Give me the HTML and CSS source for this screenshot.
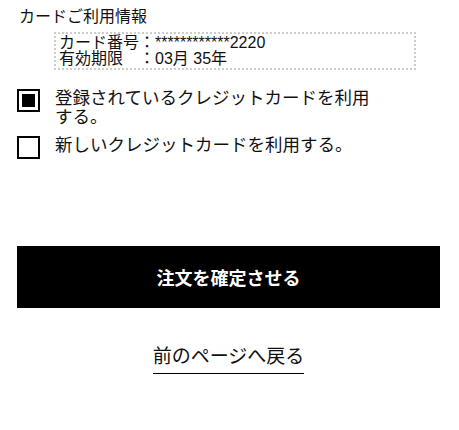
FILE: index.html
```html
<!DOCTYPE html>
<html lang="ja">
<head>
    <meta charset="UTF-8">
    <meta name="viewport" content="width=device-width, initial-scale=1.0">
    <title>お支払い確認</title>
    <link rel="stylesheet" href="styles.css">
</head>
<body>
    <div class="container">
        <h2 class="section-title">カードご利用情報</h2>
        <div class="card-info">
            <div>カード番号：************2220</div>
            <div>有効期限　：03月 35年</div>
        </div>

        <div class="options">
            <label class="option">
                <span class="check checked"></span>
                <span class="option-text">登録されているクレジットカードを利用する。</span>
            </label>
            <label class="option">
                <span class="check"></span>
                <span class="option-text">新しいクレジットカードを利用する。</span>
            </label>
        </div>

        <button type="submit" class="submit-btn">注文を確定させる</button>

        <div class="back">
            <a href="#" class="back-link">前のページへ戻る</a>
        </div>
    </div>
</body>
</html>
```

FILE: styles.css
```css
body {
    margin: 0;
    font-family: "Liberation Sans", "Noto Sans CJK JP", sans-serif;
    color: #111;
    background: white;
    text-spacing-trim: space-all;
}
.container {
    padding: 8px 19px 0 17px;
}
.section-title {
    margin: 0 0 0 2px;
    font-size: 16px;
    font-weight: normal;
    line-height: 18px;
}
.card-info {
    margin: 6px 24px 0 37px;
    padding: 1px 3px;
    border: 2px dotted #ccc;
    font-size: 16px;
    line-height: 16px;
}
.options {
    margin-top: 19px;
}
.option {
    display: flex;
    align-items: flex-start;
    margin-bottom: 9px;
    cursor: pointer;
}
.check {
    flex: none;
    width: 19px;
    height: 19px;
    border: 2px solid #000;
    margin-right: 15px;
    position: relative;
}
.check.checked::after {
    content: "";
    position: absolute;
    left: 3px;
    top: 3px;
    width: 13px;
    height: 13px;
    background: #000;
}
.option-text {
    max-width: 318px;
    font-size: 17.5px;
    line-height: 19px;
}
.submit-btn {
    display: block;
    width: 100%;
    height: 62px;
    margin-top: 87px;
    border: none;
    background-color: #000;
    color: white;
    font-family: inherit;
    font-size: 18px;
    font-weight: bold;
    cursor: pointer;
}
.back {
    margin-top: 36px;
    text-align: center;
}
.back-link {
    display: inline-block;
    color: #111;
    text-decoration: none;
    font-size: 19px;
    line-height: 26px;
    border-bottom: 1px solid #000;
    padding-bottom: 3px;
}
```
